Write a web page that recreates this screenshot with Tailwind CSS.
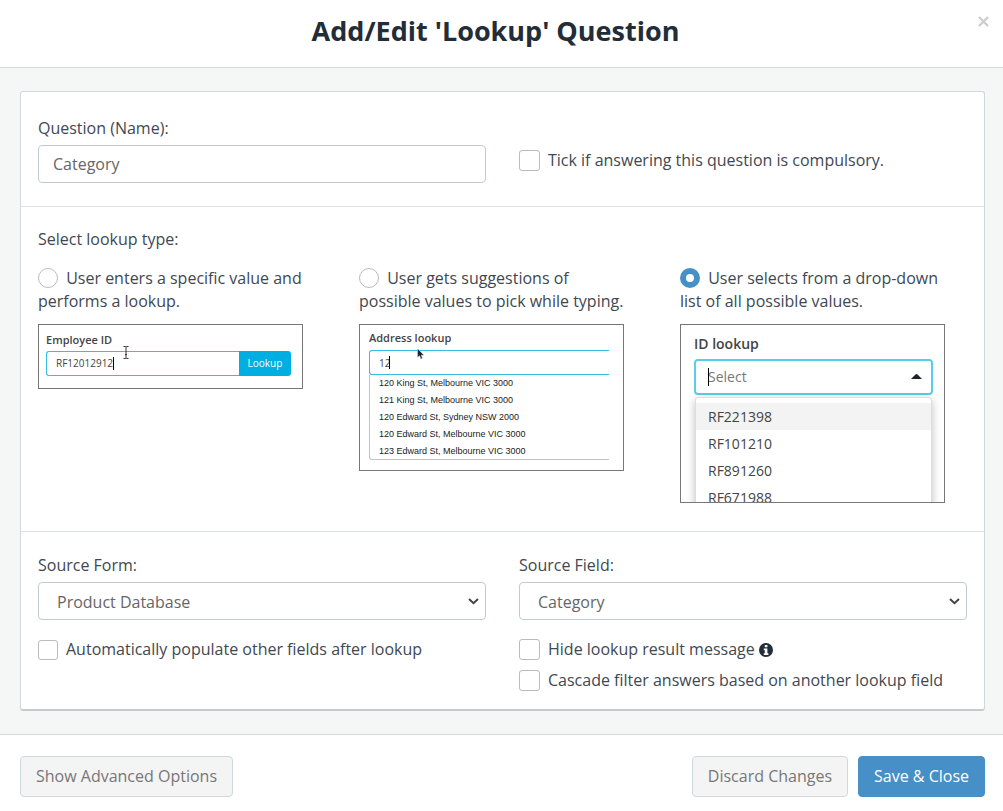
<!DOCTYPE html>
<html lang="en">
<head>
  <meta charset="UTF-8">
  <meta name="viewport" content="width=device-width, initial-scale=1.0">
  <title>Add/Edit 'Lookup' Question</title>
  <script src="https://cdn.jsdelivr.net/npm/@tailwindcss/browser@4"></script>
</head>
<body class="min-h-screen bg-white font-['Open_Sans',sans-serif] text-base leading-[23px] text-[#3f4851]">

  <form>
    <!-- Header -->
    <header class="relative border-b border-[#cfd9db] pt-[11px] pr-8 pb-[17px] pl-5 text-center">
      <h1 class="pl-4 -ml-4 text-[27px] leading-[39px] font-bold text-[#222d38]">Add/Edit 'Lookup' Question</h1>
      <button type="button" aria-label="Close" class="absolute top-[14px] right-3 p-0.5">
        <svg class="size-[11px]" viewBox="0 0 11 11" fill="none" stroke="#cccccc" stroke-width="2.2"><path d="M1 1l9 9M10 1l-9 9"/></svg>
      </button>
    </header>

    <!-- Body -->
    <main class="bg-[#f4f7f6] pt-[23px] pr-[18px] pb-[23px] pl-5">
      <div class="rounded-[3px] border border-b-2 border-[#cfd9db] border-b-[#c1cbd0] bg-white">

        <section class="grid grid-cols-2 gap-x-[33px] border-b border-[#dbe3e5] px-[17px] pt-[25px] pb-[23px]">
          <div>
            <label for="name" class="mb-[5px] block">Question (Name):</label>
            <input id="name" type="text" value="Category" class="block h-[38px] w-full rounded border border-[#c1cbd0] px-[14px] text-[#666666]">
          </div>
          <label class="flex items-center gap-2 pt-5">
            <input type="checkbox" class="size-[21px] shrink-0 appearance-none rounded-[3px] border border-[#bbbbbb] bg-white">
            Tick if answering this question is compulsory.
          </label>
        </section>

        <section class="border-b border-[#dbe3e5] px-[17px] pt-[21px] pb-7">
          <h2 class="mb-4">Select lookup type:</h2>
          <div class="grid grid-cols-3 items-start gap-x-[34px]">

            <div class="w-[265px]">
              <label class="mb-[11px] block">
                <input type="radio" name="type" class="mr-1 size-5 appearance-none rounded-full border border-[#bbbbbb] bg-white align-[-4px]">
                User enters a specific value and performs a lookup.
              </label>
              <div class="relative h-[65px] border border-[#777777] px-[7px] pt-[7px] text-[#444444]">
                <label for="employee" class="block text-[11px] leading-4 font-semibold">Employee ID</label>
                <div class="mt-[3px] flex h-[25px] w-[245px] text-[10px]">
                  <input id="employee" type="text" value="RF12012912" readonly class="min-w-0 flex-1 rounded-l-[3px] border border-r-0 border-[#35bfe6] px-[9px]">
                  <button type="button" class="w-[52px] rounded-r-[3px] bg-[#00aee1] font-medium text-white">Lookup</button>
                </div>
                <!-- caret and text cursor -->
                <span class="absolute top-[32px] left-[74px] h-[13px] w-px bg-black"></span>
                <svg class="absolute top-[21px] left-[84px]" width="6" height="13" viewBox="0 0 6 13" fill="none" stroke="#333333"><path d="M.5 .5h2l.5 .5 .5-.5h2M3 1v11M.5 12.5h2l.5-.5 .5 .5h2M2 8.5h2"/></svg>
              </div>
            </div>

            <div class="w-[265px]">
              <label class="mb-[11px] block">
                <input type="radio" name="type" class="mr-1 size-5 appearance-none rounded-full border border-[#bbbbbb] bg-white align-[-4px]">
                User gets suggestions of possible values to pick while typing.
              </label>
              <div class="relative h-[147px] border border-[#777777] pt-[5px] pr-[14px] pl-[9px] text-[#444444]">
                <label for="address" class="block text-[11px] leading-4 font-semibold">Address lookup</label>
                <input id="address" type="text" value="12" readonly class="mt-1 block h-[25px] w-full rounded-l-[3px] border border-r-0 border-[#35bfe6] px-[9px] text-[10px]">
                <ul class="h-[85px] rounded-bl-[3px] border-b border-l border-[#c4c4c4] pl-[9px] font-['Liberation_Sans',sans-serif] text-[9px] leading-[17px] text-[#222222]">
                  <li>120 King St, Melbourne VIC 3000</li>
                  <li>121 King St, Melbourne VIC 3000</li>
                  <li>120 Edward St, Sydney NSW 2000</li>
                  <li>120 Edward St, Melbourne VIC 3000</li>
                  <li>123 Edward St, Melbourne VIC 3000</li>
                </ul>
                <!-- caret and mouse pointer -->
                <span class="absolute top-[31px] left-[29px] h-[13px] w-px bg-black"></span>
                <svg class="absolute top-[23px] left-[57px]" width="8" height="12" viewBox="0 0 8 12"><path d="M.5 .5v9l2-1.8 1.4 3.3 1.6-.7L4.200 7.200h2.800z" fill="#1c2430" stroke="#ffffff" stroke-width=".4"/></svg>
              </div>
            </div>

            <div class="w-[265px]">
              <label class="mb-[11px] block">
                <input type="radio" name="type" checked class="mr-1 size-5 appearance-none rounded-full border-[#bbbbbb] bg-white align-[-4px] checked:border-[6px] checked:border-[#468fc7]">
                User selects from a drop-down list of all possible values.
              </label>
              <div class="relative h-[179px] overflow-hidden border border-[#777777] pt-[9px] pr-[11px] pl-[13px] text-sm text-[#444444]">
                <label for="lookup-id" class="block leading-5 font-semibold">ID lookup</label>
                <select id="lookup-id" class="mt-[5px] block h-9 w-full appearance-none rounded border-2 border-[#5accec] px-3 text-sm text-[#777777]">
                  <option>Select</option>
                </select>
                <ul class="mx-px mt-[2px] rounded-t-[3px] border border-[#dddddd] bg-white pt-[5px] leading-[27px] shadow-[0_3px_10px_rgba(0,0,0,0.25)]">
                  <li class="bg-[#f3f3f3] px-3">RF221398</li>
                  <li class="px-3">RF101210</li>
                  <li class="px-3">RF891260</li>
                  <li class="px-3">RF671988</li>
                </ul>
                <!-- caret and open arrow -->
                <span class="absolute top-[43px] left-[27px] h-[18px] w-px bg-black"></span>
                <svg class="absolute top-[49px] right-[22px]" width="11" height="5" viewBox="0 0 11 5"><path d="M0 5L4.500 .4q1-.7 2 0L11 5z" fill="#1c2430"/></svg>
              </div>
            </div>
          </div>
        </section>

        <section class="grid grid-cols-2 gap-x-[33px] px-[17px] pt-[22px] pb-[17px]">
          <div>
            <label for="form" class="mb-[5px] block">Source Form:</label>
            <div class="relative">
              <select id="form" class="block h-[38px] w-full appearance-none rounded border border-[#c1cbd0] bg-white px-[18px] pt-0.5 text-[#666666]">
                <option>Product Database</option>
              </select>
              <svg class="pointer-events-none absolute top-4 right-[7px]" width="11" height="7" viewBox="0 0 11 7" fill="none" stroke="#444444" stroke-width="2"><path d="M1 1l4.500 4.200L10 1"/></svg>
            </div>
            <label class="mt-[18px] flex items-center gap-2">
              <input type="checkbox" class="size-5 shrink-0 appearance-none rounded-[3px] border border-[#bbbbbb] bg-white">
              Automatically populate other fields after lookup
            </label>
          </div>
          <div>
            <label for="field" class="mb-[5px] block">Source Field:</label>
            <div class="relative">
              <select id="field" class="block h-[38px] w-full appearance-none rounded border border-[#c1cbd0] bg-white px-[18px] pt-0.5 text-[#666666]">
                <option>Category</option>
              </select>
              <svg class="pointer-events-none absolute top-4 right-[7px]" width="11" height="7" viewBox="0 0 11 7" fill="none" stroke="#444444" stroke-width="2"><path d="M1 1l4.500 4.200L10 1"/></svg>
            </div>
            <label class="mt-[18px] flex items-center gap-2">
              <input type="checkbox" class="size-[21px] shrink-0 appearance-none rounded-[3px] border border-[#bbbbbb] bg-white">
              <span class="flex items-center gap-1">
                Hide lookup result message
                <svg class="size-[14px]" viewBox="0 0 14 14"><circle cx="7" cy="7" r="7" fill="#222d38"/><path d="M5.800 2h2.600v2.200H5.800zM4.800 5.400h3.600v4.800h1V12H4.800v-1.800h1V7.200h-1z" fill="#ffffff"/></svg>
              </span>
            </label>
            <label class="mt-2 flex items-center gap-2">
              <input type="checkbox" class="size-[21px] shrink-0 appearance-none rounded-[3px] border border-[#bbbbbb] bg-white">
              Cascade filter answers based on another lookup field
            </label>
          </div>
        </section>
      </div>
    </main>

    <!-- Footer -->
    <footer class="flex gap-[10px] border-t border-[#cfd9db] pt-[21px] pr-[18px] pb-[14px] pl-5">
      <button type="button" class="mr-auto h-[41px] rounded border border-[#cfd9db] bg-[#f4f4f4] px-[15px] text-[#777777]">Show Advanced Options</button>
      <button type="button" class="h-[41px] rounded border border-[#cfd9db] bg-[#f4f4f4] px-[15px] text-[#777777]">Discard Changes</button>
      <button type="submit" class="h-[41px] rounded border border-[#468fc7] bg-[#468fc7] px-[15px] text-white">Save &amp; Close</button>
    </footer>
  </form>

</body>
</html>
